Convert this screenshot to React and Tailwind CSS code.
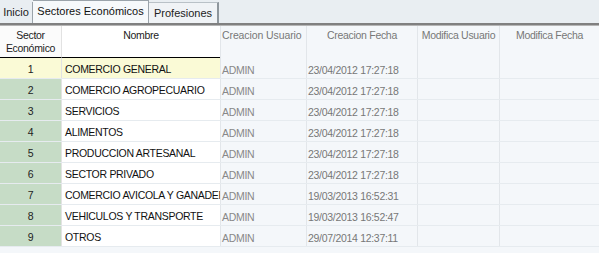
import React from 'react'

const rows = [
  ['1', 'COMERCIO GENERAL', 'ADMIN', '23/04/2012 17:27:18'],
  ['2', 'COMERCIO AGROPECUARIO', 'ADMIN', '23/04/2012 17:27:18'],
  ['3', 'SERVICIOS', 'ADMIN', '23/04/2012 17:27:18'],
  ['4', 'ALIMENTOS', 'ADMIN', '23/04/2012 17:27:18'],
  ['5', 'PRODUCCION ARTESANAL', 'ADMIN', '23/04/2012 17:27:18'],
  ['6', 'SECTOR PRIVADO', 'ADMIN', '23/04/2012 17:27:18'],
  ['7', 'COMERCIO AVICOLA Y GANADERO', 'ADMIN', '19/03/2013 16:52:31'],
  ['8', 'VEHICULOS Y TRANSPORTE', 'ADMIN', '19/03/2013 16:52:47'],
  ['9', 'OTROS', 'ADMIN', '29/07/2014 12:37:11'],
]

const App = () => {
  return (
    <div className="w-[599px] h-[253px] overflow-hidden bg-[#f4f7fa] text-[10.5px] tracking-[-0.3px] leading-none whitespace-nowrap" style={{ fontFamily: '"Liberation Sans", Arial, sans-serif' }}>
      {/* tabs */}
      <div className="h-[23px] bg-[#e9eef2] flex items-end text-[11px] tracking-normal">
        <div className="w-[33px] h-[21px] flex items-center justify-center text-[#222] border-r border-[#9aa3aa]">Inicio</div>
        <div className="w-[116px] h-[23px] flex items-center justify-center pb-[2px] text-[#111] bg-[#f6f9fb] border-r border-[#9aa3aa] border-t">Sectores Económicos</div>
        <div className="w-[70px] h-[21px] flex items-center justify-center text-[#222] bg-[#f0f3f6] border-r-2 border-[#8e969c] border-t border-t-[#b9c1c7]">Profesiones</div>
      </div>
      <div className="h-[3px] bg-[#808080] border-b border-[#b5b5b5]" />

      {/* header */}
      <div className="flex h-[32px]">
        <div className="w-[62px] bg-[#fbfbfb] border-b border-black border-r border-r-[#e2e2e2] flex items-center justify-center text-center leading-[13px] text-[#222]">
          Sector<br />Económico
        </div>
        <div className="w-[158px] bg-white border-b border-black flex items-start justify-center pt-[4px] text-[#222]">Nombre</div>
        <div className="w-[86px] border-l border-[#e2e6ea] flex items-start pt-[4px] pl-[1px] tracking-[-0.1px] text-[#777]">Creacion Usuario</div>
        <div className="w-[111px] border-l border-[#e2e6ea] flex items-start justify-center pt-[4px] text-[#777]">Creacion Fecha</div>
        <div className="w-[82px] border-l border-[#e2e6ea] flex items-start justify-center pt-[4px] text-[#777]">Modifica Usuario</div>
        <div className="flex-1 border-l border-[#e2e6ea] flex items-start justify-center pt-[4px] text-[#777]">Modifica Fecha</div>
      </div>

      {/* rows */}
      {rows.map((r, i) => (
        <div key={r[0]} className="flex h-[21px] border-b border-[#e6ebef]">
          <div className={`w-[62px] flex items-center justify-center pt-[2px] text-[#222] border-r border-[#e2e2e2] ${i === 0 ? 'bg-[#fafad6]' : 'bg-[#c6dcc6]'}`}>{r[0]}</div>
          <div className={`w-[158px] flex items-center pl-[3px] pt-[2px] text-[#111] overflow-hidden ${i === 0 ? 'bg-[#fafad6]' : 'bg-white'}`}>{r[1]}</div>
          <div className="w-[86px] flex items-center pl-[1px] pt-[4px] text-[#888] border-l border-[#e2e6ea]">{r[2]}</div>
          <div className="w-[111px] flex items-center pl-[1px] pt-[4px] text-[#777] border-l border-[#e2e6ea]">{r[3]}</div>
          <div className="w-[82px] border-l border-[#e2e6ea]" />
          <div className="flex-1 border-l border-[#e2e6ea]" />
        </div>
      ))}
    </div>
  )
}

export default App
